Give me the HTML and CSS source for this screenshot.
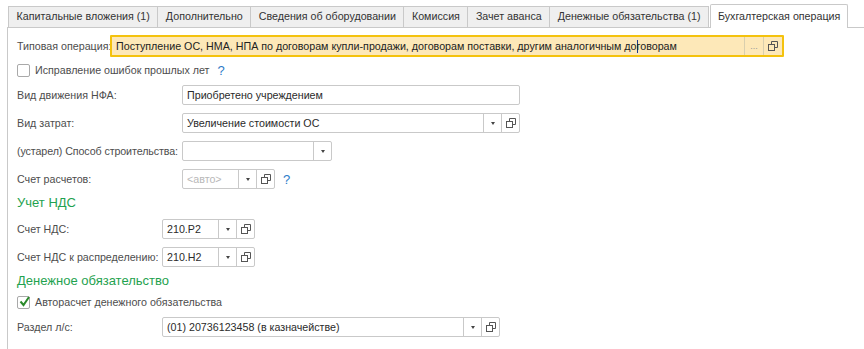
FILE: index.html
```html
<!DOCTYPE html>
<html lang="ru">
<head>
  <meta charset="UTF-8" />
  <title>Бухгалтерская операция</title>
  <link rel="stylesheet" href="styles.css">
</head>
<body>

<div class="tabs">
  <div class="tab">Капитальные вложения (1)</div>
  <div class="tab">Дополнительно</div>
  <div class="tab">Сведения об оборудовании</div>
  <div class="tab">Комиссия</div>
  <div class="tab">Зачет аванса</div>
  <div class="tab">Денежные обязательства (1)</div>
  <div class="tab active">Бухгалтерская операция</div>
</div>

<div class="panel">

  <div class="row row-typ">
    <span class="lbl w-typ">Типовая операция:</span>
    <div class="field field-typ">
      <span class="val">Поступление ОС, НМА, НПА по договорам купли-продажи, договорам поставки, другим аналогичным до<i class="caret"></i>говорам</span>
      <span class="btn dots">...</span>
      <span class="btn"><svg class="ico-copy" viewBox="0 0 10 10"><path d="M3.5 3V0.5h6v6H7"/><rect x="0.5" y="3.5" width="6" height="6"/></svg></span>
    </div>
  </div>

  <div class="row row-check">
    <span class="box"></span>
    <span class="check-lbl">Исправление ошибок прошлых лет</span>
    <span class="help">?</span>
  </div>

  <div class="row">
    <span class="lbl w-main">Вид движения НФА:</span>
    <div class="field w338"><span class="val">Приобретено учреждением</span></div>
  </div>

  <div class="row">
    <span class="lbl w-main">Вид затрат:</span>
    <div class="field w338">
      <span class="val">Увеличение стоимости ОС</span>
      <span class="btn"><i class="arrow"></i></span>
      <span class="btn"><svg class="ico-copy" viewBox="0 0 10 10"><path d="M3.5 3V0.5h6v6H7"/><rect x="0.5" y="3.5" width="6" height="6"/></svg></span>
    </div>
  </div>

  <div class="row">
    <span class="lbl w-main lbl-tight">(устарел) Способ строительства:</span>
    <div class="field w150">
      <span class="val"></span>
      <span class="btn"><i class="arrow"></i></span>
    </div>
  </div>

  <div class="row">
    <span class="lbl w-main">Счет расчетов:</span>
    <div class="field w93">
      <span class="val placeholder">&lt;авто&gt;</span>
      <span class="btn"><i class="arrow"></i></span>
      <span class="btn"><svg class="ico-copy" viewBox="0 0 10 10"><path d="M3.5 3V0.5h6v6H7"/><rect x="0.5" y="3.5" width="6" height="6"/></svg></span>
    </div>
    <span class="help">?</span>
  </div>

  <h2 class="group">Учет НДС</h2>

  <div class="row row-nds">
    <span class="lbl w-nds">Счет НДС:</span>
    <div class="field w93">
      <span class="val">210.Р2</span>
      <span class="btn"><i class="arrow"></i></span>
      <span class="btn"><svg class="ico-copy" viewBox="0 0 10 10"><path d="M3.5 3V0.5h6v6H7"/><rect x="0.5" y="3.5" width="6" height="6"/></svg></span>
    </div>
  </div>

  <div class="row">
    <span class="lbl w-nds">Счет НДС к распределению:</span>
    <div class="field w93">
      <span class="val">210.Н2</span>
      <span class="btn"><i class="arrow"></i></span>
      <span class="btn"><svg class="ico-copy" viewBox="0 0 10 10"><path d="M3.5 3V0.5h6v6H7"/><rect x="0.5" y="3.5" width="6" height="6"/></svg></span>
    </div>
  </div>

  <h2 class="group group-money">Денежное обязательство</h2>

  <div class="row row-check row-auto">
    <span class="box"><svg class="tick" viewBox="0 0 13 13"><path d="M2.5 6.5l3 3.5 5.5-8"/></svg></span>
    <span class="check-lbl">Авторасчет денежного обязательства</span>
  </div>

  <div class="row row-razdel">
    <span class="lbl w-nds">Раздел л/с:</span>
    <div class="field w338">
      <span class="val">(01) 20736123458 (в казначействе)</span>
      <span class="btn"><i class="arrow"></i></span>
      <span class="btn"><svg class="ico-copy" viewBox="0 0 10 10"><path d="M3.5 3V0.5h6v6H7"/><rect x="0.5" y="3.5" width="6" height="6"/></svg></span>
    </div>
  </div>

</div>

</body>
</html>
```

FILE: styles.css
```css
:root {
  --line: #c9c9c9;
  --tab-bg: #efefef;
  --label: #4d4d4d;
  --text: #333;
  --green: #1fa24f;
  --blue: #2d7cc8;
}

* { box-sizing: border-box; margin: 0; padding: 0; }

body {
  font-family: 'Liberation Sans', Arial, sans-serif;
  font-size: 10.7px;
  color: var(--text);
  background: #fff;
  overflow: hidden;
}

/* Tabs */
.tabs {
  display: flex;
  align-items: flex-end;
  height: 28px;
  padding-top: 4px;
  margin-left: 7px;
  padding-left: 1px;
  border-bottom: 1px solid var(--line);
}

.tab {
  height: 21px;
  line-height: 19px;
  padding: 0 7.5px;
  background: var(--tab-bg);
  border: 1px solid var(--line);
  border-bottom: none;
  border-left: none;
  color: var(--text);
  white-space: nowrap;
}

.tab:first-child {
  border-left: 1px solid var(--line);
}

.tab.active {
  height: 24px;
  line-height: 22px;
  margin-bottom: -1px;
  margin-left: 1px;
  padding: 0 7px;
  background: #fff;
  border-left: 1px solid var(--line);
  border-radius: 2px 2px 0 0;
}

/* Panel */
.panel {
  margin-left: 7px;
  height: 321px;
  border-left: 1px solid var(--line);
  padding: 7px 0 0 9px;
}

.row {
  display: flex;
  align-items: center;
  height: 20px;
  margin-top: 8px;
}

.lbl {
  color: var(--label);
  white-space: nowrap;
  flex-shrink: 0;
}

.lbl-tight { letter-spacing: -0.1px; }

.w-typ { width: 93px; }
.w-main { width: 165px; }
.w-nds { width: 145px; }

.field {
  display: flex;
  align-items: stretch;
  height: 20px;
  border: 1px solid var(--line);
  border-radius: 2px;
  background: #fff;
}

.w338 { width: 338px; }
.w150 { width: 150px; }
.w93 { width: 93px; }

.val {
  flex: 1;
  padding: 0 4px;
  line-height: 18px;
  white-space: nowrap;
  overflow: hidden;
  color: #2b2b2b;
}

.placeholder { color: #b8b8b8; }

.btn {
  width: 18px;
  display: flex;
  align-items: center;
  justify-content: center;
  border-left: 1px solid var(--line);
}

.arrow {
  width: 0;
  height: 0;
  border-left: 2.5px solid transparent;
  border-right: 2.5px solid transparent;
  border-top: 3px solid #444;
}

.ico-copy {
  width: 10px;
  height: 10px;
  fill: #fff;
  stroke: #555;
  stroke-width: 1;
}

/* Typical operation field */
.row-typ {
  height: 22px;
  margin-top: 0;
}

.field-typ {
  width: 674px;
  height: 22px;
  border: 2px solid #f4c20d;
  background: #fde8b8;
  border-radius: 1px;
}

.field-typ .val { color: #222; }

.field-typ .btn {
  width: 19px;
  border-left-color: #d9cfae;
}

.field-typ .ico-copy { fill: #fde8b8; }

.dots {
  color: #999;
  font-size: 9px;
  line-height: 18px;
}

.caret {
  display: inline-block;
  width: 1px;
  height: 13px;
  margin-right: -1px;
  background: #1b3a8c;
  vertical-align: -3px;
}

/* Checkboxes */
.row-check {
  height: 16px;
  margin-top: 5px;
}

.box {
  width: 13px;
  height: 13px;
  border: 1px solid #a9a9a9;
  border-radius: 2px;
  background: #fff;
  margin-right: 5px;
  position: relative;
}

.tick {
  position: absolute;
  left: 0;
  top: -2px;
  width: 13px;
  height: 13px;
  fill: none;
  stroke: #2a8a2a;
  stroke-width: 2;
}

.check-lbl { color: var(--label); }

.help {
  color: var(--blue);
  font-size: 13px;
  margin-left: 8px;
}

.row-check + .row { margin-top: 7px; }

/* Groups */
.group {
  font-size: 13px;
  font-weight: normal;
  color: var(--green);
  height: 18px;
  line-height: 18px;
  margin-top: 5px;
}

.group + .row { margin-top: 7px; }

.group-money + .row-auto { margin-top: 4px; }

.row-auto + .row-razdel { margin-top: 7px; }
```
